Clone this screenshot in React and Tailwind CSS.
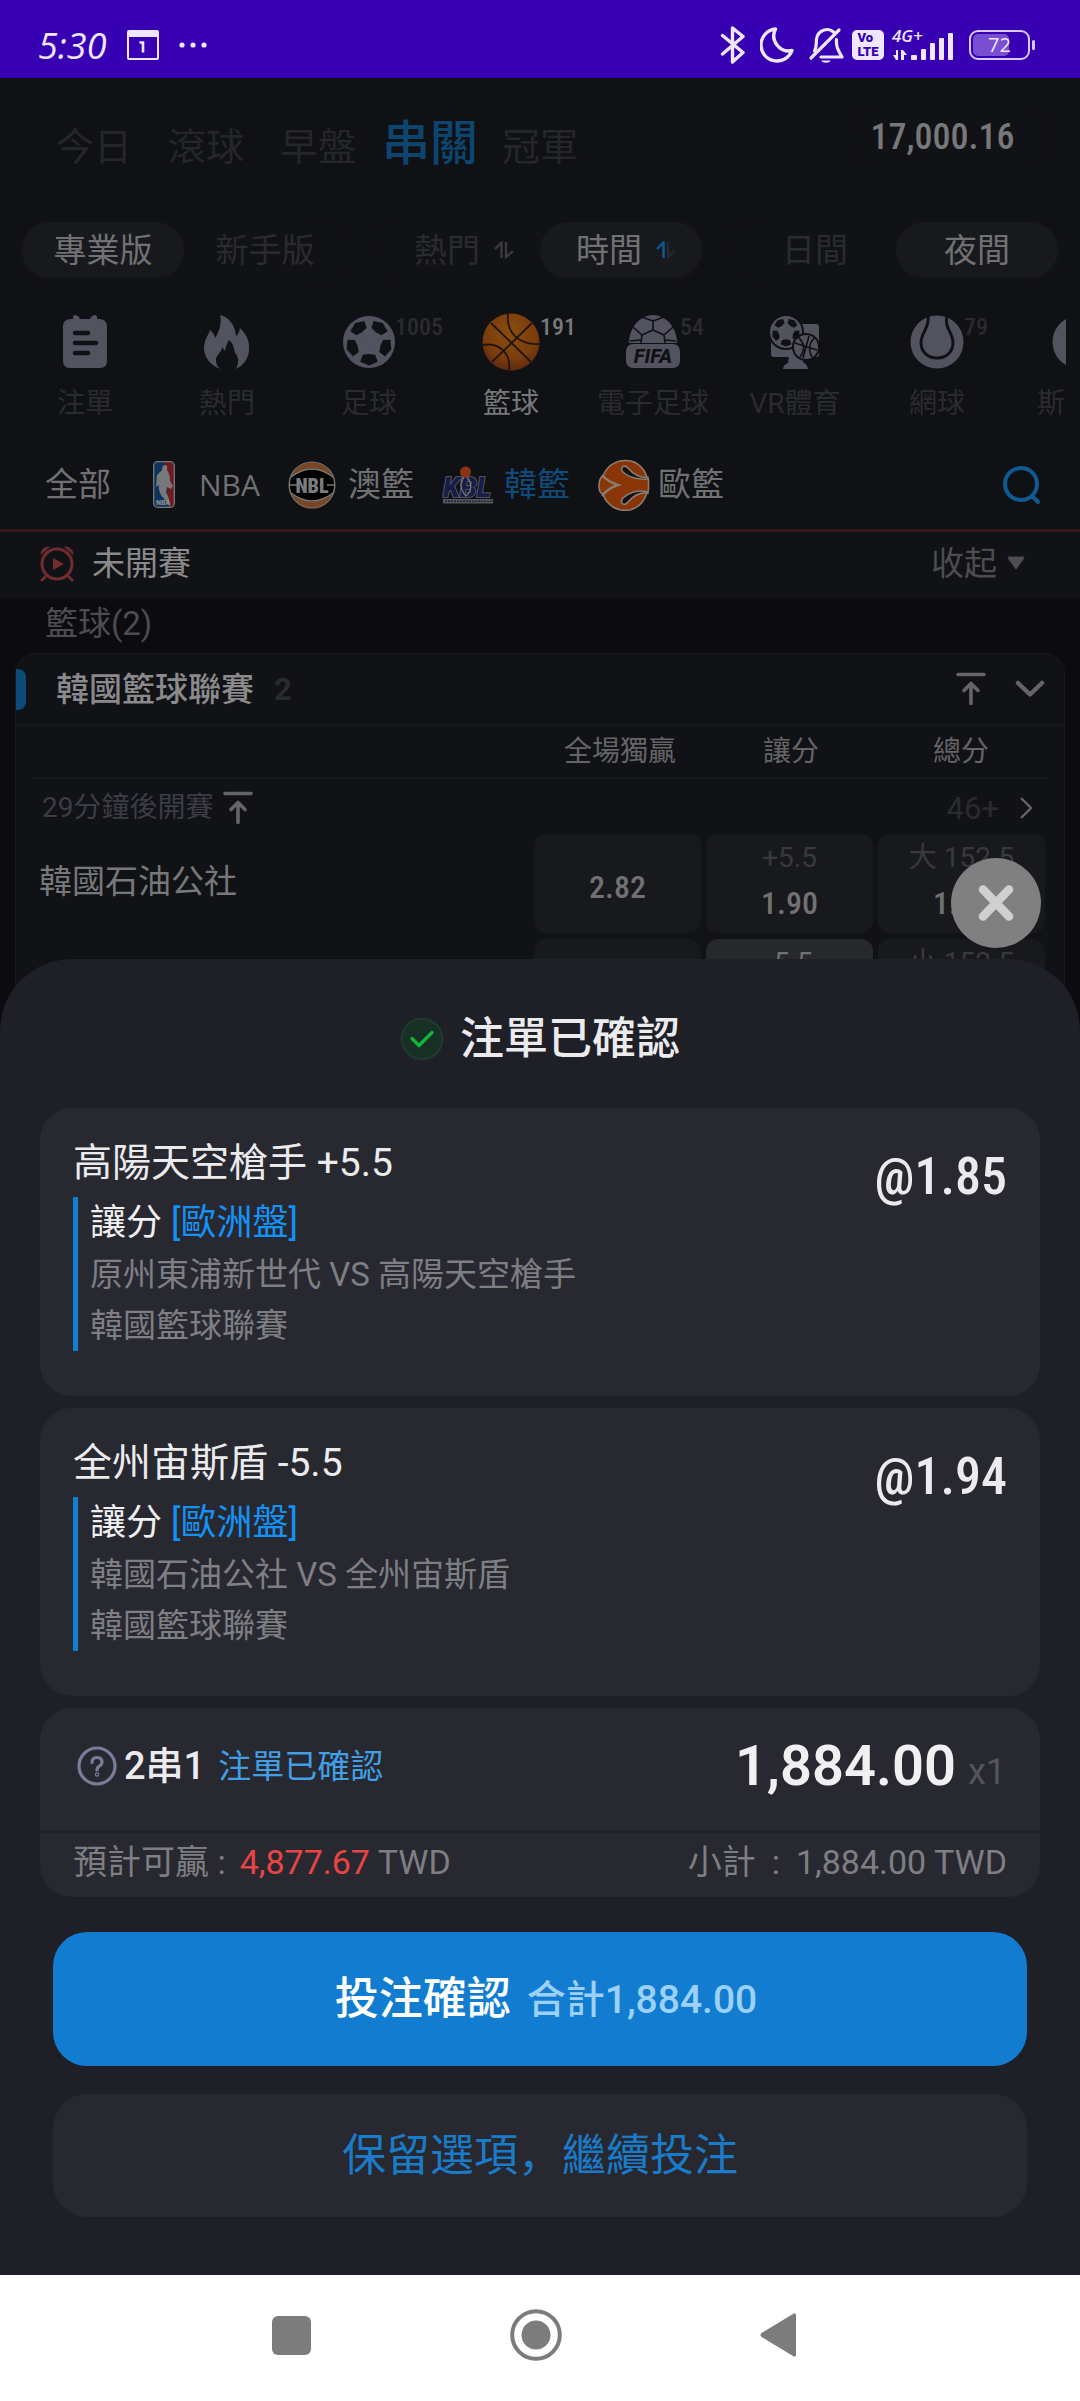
import React from "react";

const condensed = 'font-["Roboto_Condensed","Roboto",sans-serif]';

/* ---------- status bar ---------- */

function StatusBar() {
  return (
    <header className="flex h-[78px] items-center justify-between bg-[#3700b3] pt-3 pr-[45px] pl-[38px] text-[#efe6ff]">
      <div className="flex items-center gap-5">
        <span className='pt-0.5 font-["Open_Sans","Roboto",sans-serif] text-[36px] leading-9 italic'>5:30</span>
        <svg width="32" height="30" viewBox="0 0 32 30" aria-hidden="true">
          <rect x="1" y="1" width="30" height="28" rx="1" fill="none" stroke="currentColor" strokeWidth="2" />
          <rect x="1" y="1" width="30" height="6" fill="currentColor" />
          <path d="M12.500 12.500 H16 V22.500" fill="none" stroke="currentColor" strokeWidth="2.600" />
        </svg>
        <svg width="28" height="8" viewBox="0 0 28 8" fill="currentColor" aria-hidden="true">
          <circle cx="3" cy="4" r="2.600" />
          <circle cx="14" cy="4" r="2.600" />
          <circle cx="25" cy="4" r="2.600" />
        </svg>
      </div>
      <div className="flex items-center">
        <svg className="mr-3.5" width="26" height="38" viewBox="0 0 26 38" fill="none" stroke="currentColor" strokeWidth="3.400" strokeLinejoin="round" strokeLinecap="round" aria-hidden="true">
          <path d="M2.500 9.500 L23 26.500 L12.500 36 V2 L23 10.500 L2.500 28" />
        </svg>
        <svg className="mr-3.5" width="34" height="36" viewBox="0 0 34 36" fill="none" stroke="currentColor" strokeWidth="3.400" strokeLinejoin="round" aria-hidden="true">
          <path d="M15.500 2 A16 16 0 1 0 32 23.500 A15 15 0 0 1 15.500 2 Z" />
        </svg>
        <svg className="mr-2" width="36" height="38" viewBox="0 0 36 38" fill="none" stroke="currentColor" strokeWidth="3.200" strokeLinecap="round" strokeLinejoin="round" aria-hidden="true">
          <path d="M3 32 L31 4" />
          <path d="M6.500 25 C9 21 8 17 8.500 13 C10 4 20 1 25.500 6" />
          <path d="M28.500 13.500 C28 21 30 24 34 31 H13" />
          <path d="M13 34.500 A5.500 4 0 0 0 23 34.500 Z" fill="currentColor" stroke="none" />
        </svg>
        <span className='mr-2 grid h-[30px] w-8 content-center justify-center rounded-[5px] bg-[#efe6ff] font-["Roboto",sans-serif] text-[13px] leading-[14px] font-black text-[#3700b3]'>
          <span>Vo</span>
          <span>LTE</span>
        </span>
        <span className="mr-3.5 flex flex-col">
          <span className='font-["Open_Sans",sans-serif] text-[17px] leading-[14px] font-semibold italic'>4G+</span>
          <svg className="-mt-3" width="63" height="30" viewBox="0 0 63 30" fill="currentColor" aria-hidden="true">
            <path d="M6 19 V29 H4 L1 24 H4 V19 Z M9 29 V19 H11 L15 24 H12 V29 Z" />
            <rect x="19" y="24" width="6" height="5" rx="1" />
            <rect x="29" y="18" width="5" height="11" rx="1" />
            <rect x="38" y="12" width="5" height="17" rx="1" />
            <rect x="47" y="7" width="5" height="22" rx="1" />
            <rect x="56" y="2" width="5" height="27" rx="1" />
          </svg>
        </span>
        <span className="relative flex h-[30px] w-[61px] items-center rounded-[9px] border-2 border-[#d9c8ff] p-0.5">
          <span className="h-[22px] w-9 rounded-[5px] bg-[#7a4ed0]" />
          <span className='absolute inset-0 flex items-center justify-center font-["Open_Sans",sans-serif] text-[20px] leading-none'>72</span>
        </span>
        <span className="ml-0.5 h-2.5 w-[3px] rounded-sm bg-[#d9c8ff]" />
      </div>
    </header>
  );
}

/* ---------- top navigation ---------- */

function TopTabs() {
  return (
    <div className="flex h-[140px] items-start justify-between pt-[26px] pr-7 pl-14">
      <nav className="mt-1 flex items-baseline text-[38px] leading-[72px] text-[#25262a]">
        <button type="button" className="mr-9">今日</button>
        <button type="button" className="mr-9">滾球</button>
        <button type="button" className="mr-[26px]">早盤</button>
        <button type="button" className="mr-6 text-[48px] font-medium text-[#0d456f]">串關</button>
        <button type="button">冠軍</button>
      </nav>
      <div className={`mt-0.5 flex h-[62px] w-[203px] items-center justify-center rounded-full bg-[#111215] pr-4 text-[36px] font-medium text-[#77787a] ${condensed}`}>
        17,000.16
      </div>
    </div>
  );
}

function SortIcon({ up, down }) {
  return (
    <svg width="20" height="18" viewBox="0 0 20 18" fill="none" strokeWidth="2.400" aria-hidden="true">
      <path d="M1 8 L7.500 1.500 V17" stroke={up} />
      <path d="M12 1 V16 L19 10" stroke={down} />
    </svg>
  );
}

function Pill({ active, children }) {
  return (
    <button
      type="button"
      className={`flex h-14 flex-1 items-center justify-center rounded-full text-[33px] leading-none ${
        active ? "bg-[#18191c] text-[#717174]" : "text-[#2a2b2f]"
      }`}
    >
      {children}
    </button>
  );
}

function Filters() {
  return (
    <div className="flex gap-6 px-[18px]">
      <div className="flex flex-1 rounded-full bg-[#111215] p-1">
        <Pill active>專業版</Pill>
        <Pill>新手版</Pill>
      </div>
      <div className="flex flex-1 rounded-full bg-[#111215] p-1">
        <Pill>
          <span className="mr-3.5 pl-2.5">熱門</span> <SortIcon up="#3a3b3f" down="#3a3b3f" />
        </Pill>
        <Pill active>
          <span className="mr-3.5 pl-2.5">時間</span> <SortIcon up="#0f5a92" down="#222a31" />
        </Pill>
      </div>
      <div className="flex flex-1 rounded-full bg-[#111215] p-1">
        <Pill>日間</Pill>
        <Pill active>夜間</Pill>
      </div>
    </div>
  );
}

/* ---------- sport icons ---------- */

const G = "#53535f";
const BG = "#101115";

function SlipIcon() {
  return (
    <svg width="46" height="54" viewBox="0 0 46 54" aria-hidden="true">
      <path d="M9 4 H11 V2 Q11 0 13 0 Q15 0 17 2 L18 4 H28 L29 2 Q31 0 33 0 Q35 0 35 2 V4 H37 Q45 4 45 12 V46 Q45 53 38 53 H8 Q1 53 1 46 V12 Q1 4 9 4 Z" fill={G} />
      <path d="M13 18 H26 M13 28 H34 M13 38 H26" stroke={BG} strokeWidth="4.500" strokeLinecap="round" />
    </svg>
  );
}

function FlameIcon() {
  return (
    <svg width="48" height="56" viewBox="0 0 48 56" aria-hidden="true">
      <path d="M17 55 C7 51 1 43 1 34 C1 26 5 22 7 16 Q11 19 12 24 C16 18 19 10 17 1 C26 3 32 11 33 22 Q36 20 37 14 C43 20 47 27 46 35 C46 44 41 51 33 55 C36 49 36 43 32 39 C31 34 30 29 26 26 C24 29 23 32 22 37 L19 33 C19 39 12 41 13 47 C13 50 15 53 17 55 Z" fill={G} />
    </svg>
  );
}

function SoccerBall({ cx, cy, r }) {
  const a = (i, k) => {
    const t = ((i * 72 - 90) * Math.PI) / 180;
    return [cx + r * k * Math.cos(t), cy + r * k * Math.sin(t)];
  };
  const b = (i, k, d) => {
    const t = ((i * 72 - 54 + d) * Math.PI) / 180;
    return `${cx + r * k * Math.cos(t)},${cy + r * k * Math.sin(t)}`;
  };
  return (
    <g>
      <circle cx={cx} cy={cy} r={r} fill={G} />
      {[0, 1, 2, 3, 4].map((i) => (
        <polygon
          key={i}
          points={[b(i, 0.46, 0), b(i, 0.55, 26), b(i, 0.83, 24), b(i, 0.9, 0), b(i, 0.83, -24), b(i, 0.55, -26)].join(" ")}
          fill={BG}
        />
      ))}
      <polygon points={[0, 1, 2, 3, 4].map((i) => a(i, 0.34).join(",")).join(" ")} fill={G} />
    </g>
  );
}

function FootballIcon() {
  return (
    <svg width="52" height="54" viewBox="0 0 52 54" aria-hidden="true">
      <SoccerBall cx={26} cy={27} r={26} />
    </svg>
  );
}

function BasketballIcon() {
  return (
    <svg width="58" height="60" viewBox="0 0 58 60" aria-hidden="true">
      <defs>
        <radialGradient id="ball" cx="0.5" cy="0.35" r="0.65">
          <stop offset="0" stopColor="#8a4d10" />
          <stop offset="0.7" stopColor="#7a3d0c" />
          <stop offset="1" stopColor="#5e2a10" />
        </radialGradient>
      </defs>
      <circle cx="29" cy="30" r="28.500" fill="url(#ball)" />
      <g fill="none" stroke="#22150c" strokeWidth="1.800">
        <path d="M10 50 L50 11" />
        <path d="M9 11 L49 50" />
        <path d="M26 2 C24 20 36 33 57 32" />
        <path d="M1 33 C18 30 29 42 27 58" />
      </g>
    </svg>
  );
}

function FifaIcon() {
  return (
    <svg width="54" height="54" viewBox="0 0 54 54" aria-hidden="true">
      <path d="M3 28 A24 28 0 0 1 51 28 Z" fill={G} />
      <g fill="none" stroke={BG} strokeWidth="1.600">
        <path d="M27 6 V15 L16 20 L7 12 M27 15 L38 20 L47 12 M27 6 L16 2 M27 6 L38 2 M16 20 L15 28 M38 20 L39 28 M4 26 L15 25 M50 26 L39 25" />
      </g>
      <rect x="0" y="29" width="54" height="24" rx="7" fill={G} />
      <text x="27" y="48" textAnchor="middle" fontFamily="Roboto, sans-serif" fontWeight="800" fontStyle="italic" fontSize="20" fill={BG}>FIFA</text>
    </svg>
  );
}

function VrIcon() {
  return (
    <svg width="50" height="56" viewBox="0 0 50 56" aria-hidden="true">
      <rect x="1" y="10" width="48" height="33" rx="3" fill={G} />
      <path d="M19 42 H32 L33 48 Q37 50 38 55 H13 Q13 51 18 49 Z" fill={G} />
      <circle cx="16" cy="18" r="18" fill={BG} />
      <SoccerBall cx={16} cy={18} r={16} />
      <circle cx="36" cy="33" r="14" fill={BG} />
      <circle cx="36" cy="33" r="12" fill={G} />
      <path d="M25 29 L47 36 M33 44 L39 22 M28 23 Q38 32 30 43 M44 24 Q36 33 42 43" stroke={BG} strokeWidth="1.700" fill="none" />
    </svg>
  );
}

function TennisIcon() {
  return (
    <svg width="54" height="56" viewBox="0 0 54 56" aria-hidden="true">
      <circle cx="27" cy="28" r="26.500" fill={G} />
      <path d="M18 2 C20 14 11 18 11 29 C11 38 18 44 27 44 C36 44 43 38 43 29 C43 18 34 14 37 2" fill="none" stroke={BG} strokeWidth="3" />
    </svg>
  );
}

function CueBallIcon() {
  return (
    <svg width="54" height="56" viewBox="0 0 54 56" aria-hidden="true">
      <circle cx="27" cy="28" r="26.500" fill={G} />
    </svg>
  );
}

const sports = [
  { label: "注單", icon: <SlipIcon /> },
  { label: "熱門", icon: <FlameIcon /> },
  { label: "足球", icon: <FootballIcon />, count: "1005" },
  { label: "籃球", icon: <BasketballIcon />, count: "191", active: true },
  { label: "電子足球", icon: <FifaIcon />, count: "54" },
  { label: "VR體育", icon: <VrIcon /> },
  { label: "網球", icon: <TennisIcon />, count: "79" },
  { label: "斯諾克", icon: <CueBallIcon /> },
];

function SportBar() {
  return (
    <div className="mx-3.5 h-[158px] overflow-hidden">
      <nav className="flex pt-[30px]">
        {sports.map((s) => (
          <button
            key={s.label}
            type="button"
            className={`flex w-[142px] shrink-0 flex-col items-center text-[28px] leading-10 whitespace-nowrap ${s.active ? "text-[#77787a]" : "text-[#2a2b2f]"}`}
          >
            <span className="relative flex h-[60px] items-center">
              {s.icon}
              {s.count && (
                <span className={`absolute top-0 left-full text-[24px] leading-[30px] font-medium ${condensed}`}>{s.count}</span>
              )}
            </span>
            <span className="mt-3">{s.label}</span>
          </button>
        ))}
      </nav>
    </div>
  );
}

/* ---------- leagues ---------- */

function NbaLogo() {
  return (
    <svg width="22" height="47" viewBox="0 0 22 47" aria-hidden="true">
      <rect x="0.500" y="0.500" width="21" height="46" rx="4" fill="#0d335c" />
      <path d="M11 1 H18 Q21.500 1 21.500 5 V42 Q21.500 46 18 46 H16 Z" fill="#6d1a22" />
      <path d="M12 4 Q15 4 14 9 Q17 13 17 20 L20 25 L18 28 L14 26 L13 31 Q17 38 17 46 Q13 40 8 34 Q5 28 6 24 L3 26 L4 14 L9 9 Q9 4 12 4 Z" fill="#77787a" />
      <rect x="0.700" y="0.700" width="20.600" height="45.600" rx="4" fill="none" stroke="#77787a" strokeWidth="1.300" />
      <text x="3" y="44" fontFamily="Roboto, sans-serif" fontWeight="900" fontSize="7" fill="#8a8a8c">NBA</text>
    </svg>
  );
}

function NblLogo() {
  return (
    <svg width="48" height="48" viewBox="0 0 48 48" aria-hidden="true">
      <circle cx="24" cy="24" r="22.800" fill="#000" stroke="#77706a" strokeWidth="1.500" />
      <path d="M4 15 A21.500 21.500 0 0 1 44 15 Q24 0 4 15 Z" fill="#7a4726" />
      <path d="M4 33 A21.500 21.500 0 0 0 44 33 Q24 48 4 33 Z" fill="#7a4726" />
      <path d="M3 16 Q24 0 45 16 M3 32 Q24 48 45 32 M1 24 H9 M39 24 H47" fill="none" stroke="#77787a" strokeWidth="1.400" />
      <text x="24" y="32" textAnchor="middle" fontFamily="Roboto Condensed, Roboto, sans-serif" fontWeight="900" fontSize="20" fill="#7c7c7e">NBL</text>
    </svg>
  );
}

function KblLogo() {
  return (
    <svg width="52" height="38" viewBox="0 0 52 38" aria-hidden="true">
      <text x="25" y="31" textAnchor="middle" fontFamily="Roboto, sans-serif" fontWeight="900" fontStyle="italic" fontSize="27" fill="#171d48" stroke="#606167" strokeWidth="1.600" paintOrder="stroke">KBL</text>
      <circle cx="23.500" cy="6" r="5.500" fill="#8a3413" />
      <path d="M22 11 Q15 20 24 30 Q33 22 25 11" fill="none" stroke="#77787a" strokeWidth="1.300" />
      <rect x="1" y="33" width="50" height="4.500" fill="#55565c" />
      <path d="M3 35.300 H50" stroke="#23263a" strokeWidth="1.600" strokeDasharray="2 1" />
    </svg>
  );
}

function EuroLogo() {
  return (
    <svg width="52" height="52" viewBox="0 0 52 52" aria-hidden="true">
      <path d="M5 17 C10 4 22 0 33 2 C41 4 47 11 49 18 L50.500 21 V31 L49 34 C46 43 40 49 32 51 C20 53 9 47 5 35 Q1 34 1 27 Q1 19 5 17 Z" fill="#8a3508" stroke="#8b7d70" strokeWidth="1.600" />
      <path d="M4 16 Q10 23 20 26 Q10 29 4 37" fill="none" stroke="#8b7d70" strokeWidth="2.400" />
      <path d="M50 20 C40 21 30 18 25 13 C21 9 26 5 30 9 C35 15 41 19 50 18.500 Z" fill="#101418" stroke="#8b7d70" strokeWidth="1.600" />
      <path d="M50 33 C40 30 30 34 25 39 C21 44 26 48 30 43 C35 37 41 33 50 34 Z" fill="#101418" stroke="#8b7d70" strokeWidth="1.600" />
    </svg>
  );
}

function LeagueBar() {
  return (
    <nav className="flex h-[92px] items-center border-b-[3px] border-[#301b19] pr-[38px] pl-[45px] text-[33px] leading-none text-[#717174]">
      <button type="button" className="mr-[42px]">全部</button>
      <button type="button" className='mr-7 flex items-center gap-6 font-["Open_Sans",sans-serif] text-[30px] leading-none'>
        <NbaLogo />
        NBA
      </button>
      <button type="button" className="mr-7 flex items-center gap-3">
        <NblLogo />
        澳籃
      </button>
      <button type="button" className="mr-7 flex items-center gap-2.5 text-[#0f4a78]">
        <KblLogo />
        韓籃
      </button>
      <button type="button" className="flex items-center gap-2">
        <EuroLogo />
        歐籃
      </button>
      <button type="button" aria-label="搜尋" className="ml-auto">
        <svg width="40" height="40" viewBox="0 0 40 40" fill="none" stroke="#0f5a92" strokeWidth="4" strokeLinecap="round" aria-hidden="true">
          <circle cx="19" cy="19" r="16" />
          <path d="M31 32 L36 37" />
        </svg>
      </button>
    </nav>
  );
}

/* ---------- match list ---------- */

function AlarmIcon() {
  return (
    <svg width="38" height="38" viewBox="0 0 38 38" fill="none" stroke="#712c30" strokeWidth="3" strokeLinecap="round" aria-hidden="true">
      <circle cx="19" cy="20" r="15" />
      <path d="M7 33 L4 36 M31 33 L34 36" />
      <path d="M3 10 A7 7 0 0 1 11 3 Z M35 10 A7 7 0 0 0 27 3 Z" fill="#712c30" strokeWidth="1" />
      <path d="M15 14 L26 20 L15 26 Z" fill="#712c30" stroke="none" />
    </svg>
  );
}

function PinTopIcon() {
  return (
    <svg width="30" height="34" viewBox="0 0 30 34" fill="none" stroke="#656568" strokeWidth="3.600" strokeLinecap="round" strokeLinejoin="round" aria-hidden="true">
      <path d="M2 2.500 H28 M15 31.500 V12 M8 18.500 L15 11.500 L22 18.500" />
    </svg>
  );
}

function Odds({ line, value, selected }) {
  return (
    <td className="py-[3px] pr-0.5 pl-[3px]">
      <button
        type="button"
        className={`flex h-[99px] w-full flex-col items-center justify-center rounded-xl ${selected ? "bg-[#27282a]" : "bg-[#18191c]"} ${line ? "pb-1" : "pt-1.5"}`}
      >
        {line && (
          <span className={`text-[28px] leading-[42px] ${selected ? "text-[#717174]" : "text-[#38393c]"}`}>{line}</span>
        )}
        <span className={`text-[32px] leading-[48px] font-medium text-[#717174] ${condensed}`}>{value}</span>
      </button>
    </td>
  );
}

function MatchCard() {
  return (
    <section className="mx-[15px] rounded-t-[20px] border border-[#18191c] bg-[#111215]">
      <div className="flex h-[72px] items-center border-b-2 border-[#18191c] pr-[19px]">
        <span className="h-[41px] w-2.5 rounded-r-lg bg-[#0c4a78]" />
        <h2 className="ml-[30px] text-[33px] leading-none font-medium text-[#8a8a8d]">韓國籃球聯賽</h2>
        <span className="ml-5 text-[31px] leading-none font-bold text-[#2a2b2f]">2</span>
        <button type="button" aria-label="置頂" className="ml-auto">
          <PinTopIcon />
        </button>
        <button type="button" aria-label="收合聯賽" className="ml-[29px]">
          <svg width="30" height="20" viewBox="0 0 30 20" fill="none" stroke="#656568" strokeWidth="4.500" strokeLinecap="round" strokeLinejoin="round" aria-hidden="true">
            <path d="M3 4 L15 15.500 L27 4" />
          </svg>
        </button>
      </div>
      <div className="pr-[17px] pl-4">
        <table className="w-full table-fixed border-collapse">
          <colgroup>
            <col />
            <col className="w-[172px]" />
            <col className="w-[172px]" />
            <col className="w-[172px]" />
          </colgroup>
          <thead>
            <tr className="h-[52px] border-b-2 border-[#18191c] text-[28px] leading-none text-[#656568]">
              <td />
              <th className="pl-1.5 font-normal">全場獨贏</th>
              <th className="pl-1 font-normal">讓分</th>
              <th className="font-normal">總分</th>
            </tr>
          </thead>
          <tbody>
            <tr>
              <td colSpan={4}>
                <div className="flex h-[52px] items-center pt-1.5 pr-3.5 pl-2.5">
                  <span className="text-[28px] leading-none text-[#3c3c47]">29分鐘後開賽</span>
                  <button type="button" aria-label="置頂賽事" className="ml-2.5">
                    <PinTopIcon />
                  </button>
                  <button type="button" className="ml-auto flex items-center gap-5 text-[31px] leading-none text-[#2a2b2f]">
                    46+
                    <svg width="14" height="24" viewBox="0 0 14 24" fill="none" stroke="#656568" strokeWidth="2.400" aria-hidden="true">
                      <path d="M2 2 L12 12 L2 22" />
                    </svg>
                  </button>
                </div>
              </td>
            </tr>
            <tr>
              <th scope="row" className="pb-1 pl-[7px] text-left text-[33px] leading-none font-normal text-[#77787a]">韓國石油公社</th>
              <Odds value="2.82" />
              <Odds line="+5.5" value="1.90" />
              <Odds line="大 152.5" value="1.90" />
            </tr>
            <tr>
              <td />
              <Odds />
              <Odds line="-5.5" value="1.94" selected />
              <Odds line="小 152.5" value="1.90" />
            </tr>
          </tbody>
        </table>
      </div>
    </section>
  );
}

function MatchList() {
  return (
    <div className="bg-[#0c0b10]">
      <div className="flex h-[66px] items-center bg-[#111215] px-[38px] pb-1 text-[33px] leading-none">
        <AlarmIcon />
        <span className="ml-4 text-[#8a8a8d]">未開賽</span>
        <button type="button" className="ml-auto flex items-center gap-2.5 pr-[17px] text-[#4d4d50]">
          收起
          <svg width="18" height="14" viewBox="0 0 18 14" fill="#4d4d50" aria-hidden="true">
            <path d="M1.500 0.500 H16.500 Q18 1 17 2.500 L10 12.500 Q9 14 8 12.500 L1 2.500 Q0 1 1.500 0.500 Z" />
          </svg>
        </button>
      </div>
      <div className="flex h-[55px] items-center pb-1 pl-[45px] text-[33px] leading-none text-[#4d4d50]">籃球(2)</div>
      <MatchCard />
    </div>
  );
}

/* ---------- confirmation sheet ---------- */

function BetCard({ pick, odds, match }) {
  return (
    <article className="flex justify-between rounded-[32px] bg-[#272830] px-[33px] pt-7 pb-[45px]">
      <div>
        <h3 className="text-[39px] leading-[54px] text-[#ebebed]">{pick}</h3>
        <div className="mt-[7px] border-l-[5px] border-[#127fd2] pl-3 text-[33px] leading-[51px] text-[#7e7e83]">
          <p className="text-[36px] leading-[52px] text-[#f0f0f2]">
            讓分 <span className="text-[#1492f5]">[歐洲盤]</span>
          </p>
          <p>{match}</p>
          <p>韓國籃球聯賽</p>
        </div>
      </div>
      <p className={`mt-2.5 text-[52px] leading-[62px] font-medium text-[#ebebed] ${condensed}`}>{odds}</p>
    </article>
  );
}

function ConfirmSheet() {
  return (
    <section role="dialog" aria-label="注單已確認" className="absolute inset-x-0 bottom-0 rounded-t-[72px] bg-[#1e1f27] px-10 pt-[50px] pb-[58px]">
      <button
        type="button"
        aria-label="關閉"
        className="absolute -top-[101px] right-[39px] flex size-[90px] items-center justify-center rounded-full bg-[#808080]"
      >
        <svg width="36" height="38" viewBox="0 0 36 38" stroke="#d0d0d0" strokeWidth="8.500" strokeLinecap="round" aria-hidden="true">
          <path d="M5 5.500 L31 32.500 M31 5.500 L5 32.500" />
        </svg>
      </button>

      <div className="flex h-[60px] items-center justify-center gap-4">
        <svg width="44" height="44" viewBox="0 0 44 44" fill="none" aria-hidden="true">
          <circle cx="22" cy="22" r="21.500" fill="#1d3a2b" />
          <circle cx="22" cy="22" r="19" fill="#182f26" />
          <path d="M12 21.500 L19 28.500 L32 15.500" stroke="#10b63a" strokeWidth="3.400" strokeLinecap="round" strokeLinejoin="round" />
        </svg>
        <h2 className="text-[44px] leading-none font-medium text-[#ebebed]">注單已確認</h2>
      </div>

      <div className="mt-[39px] flex flex-col gap-3">
        <BetCard pick="高陽天空槍手 +5.5" odds="@1.85" match="原州東浦新世代 VS 高陽天空槍手" />
        <BetCard pick="全州宙斯盾 -5.5" odds="@1.94" match="韓國石油公社 VS 全州宙斯盾" />

        <article className="rounded-[32px] bg-[#272830]">
          <div className="flex h-[122px] items-center pr-[34px] pb-1.5 pl-[37px]">
            <svg width="40" height="40" viewBox="0 0 40 40" fill="none" stroke="#7c7c9a" strokeWidth="3.200" strokeLinecap="round" aria-hidden="true">
              <circle cx="20" cy="20" r="18" />
              <path d="M15 16.500 Q15 11.500 20 11.500 Q25 11.500 25 16 Q25 18.500 22.500 20 Q20 21.500 20 24" />
              <circle cx="20" cy="28.500" r="0.600" />
            </svg>
            <span className="ml-[7px] text-[38px] leading-none font-medium text-[#ebebed]">2串1</span>
            <span className="ml-[13px] text-[33px] leading-none text-[#429fe6]">注單已確認</span>
            <span className="ml-auto text-[56px] leading-none font-semibold text-[#f0f0f2]">1,884.00</span>
            <span className="ml-3 pt-3 text-[36px] leading-none text-[#54555c]">x1</span>
          </div>
          <div className="flex h-[67px] items-center justify-between border-t-[3px] border-[#202128] px-[33px] pb-1.5 text-[34px] leading-none text-[#7e7e83]">
            <p className="flex gap-3.5">
              <span>預計可贏 :</span>
              <span>
                <span className="text-[#ea4444]">4,877.67</span> TWD
              </span>
            </p>
            <p className="flex gap-4">
              <span>小計</span>
              <span>:</span>
              <span>1,884.00 TWD</span>
            </p>
          </div>
        </article>
      </div>

      <div className="mt-[35px] flex flex-col gap-7 px-[13px]">
        <button type="button" className="flex h-[134px] items-center justify-center gap-4 rounded-[34px] bg-[#127dd0] pl-3 text-[44px] leading-none font-medium text-white">
          投注確認
          <span className="pt-0.5 text-[39px] leading-none text-[#9bd0f7]">合計1,884.00</span>
        </button>
        <button type="button" className="flex h-[123px] items-center justify-center rounded-[34px] bg-[#272830] text-[44px] leading-none text-[#1a7bc9]">
          保留選項，繼續投注
        </button>
      </div>
    </section>
  );
}

/* ---------- system navigation ---------- */

function SystemNav() {
  return (
    <footer className="grid h-[126px] grid-cols-[1fr_auto_1fr] items-center bg-white pb-1.5 text-[#7c7c7c]">
      <button type="button" aria-label="最近" className="mr-[199px] justify-self-end">
        <svg width="39" height="39" viewBox="0 0 39 39" aria-hidden="true">
          <rect width="39" height="39" rx="6" fill="currentColor" />
        </svg>
      </button>
      <button type="button" aria-label="主畫面" className="mr-2">
        <svg width="52" height="52" viewBox="0 0 52 52" fill="none" aria-hidden="true">
          <circle cx="26" cy="26" r="23.800" stroke="currentColor" strokeWidth="4" />
          <circle cx="26" cy="26" r="14.500" fill="currentColor" />
        </svg>
      </button>
      <button type="button" aria-label="返回" className="ml-[190px] justify-self-start">
        <svg width="36" height="44" viewBox="0 0 36 44" aria-hidden="true">
          <path d="M33 1 Q36 -1 36 2 V42 Q36 45 33 43 L1.500 24 Q-0.500 22 1.500 20 Z" fill="currentColor" />
        </svg>
      </button>
    </footer>
  );
}

export default function App() {
  return (
    <div className='flex min-h-screen flex-col bg-[#0c0b10] font-["Roboto","Noto_Sans_CJK_SC",sans-serif]'>
      <StatusBar />
      <main className="relative flex-1 overflow-hidden bg-[#101115]">
        <TopTabs />
        <Filters />
        <SportBar />
        <LeagueBar />
        <MatchList />
        <ConfirmSheet />
      </main>
      <SystemNav />
    </div>
  );
}
